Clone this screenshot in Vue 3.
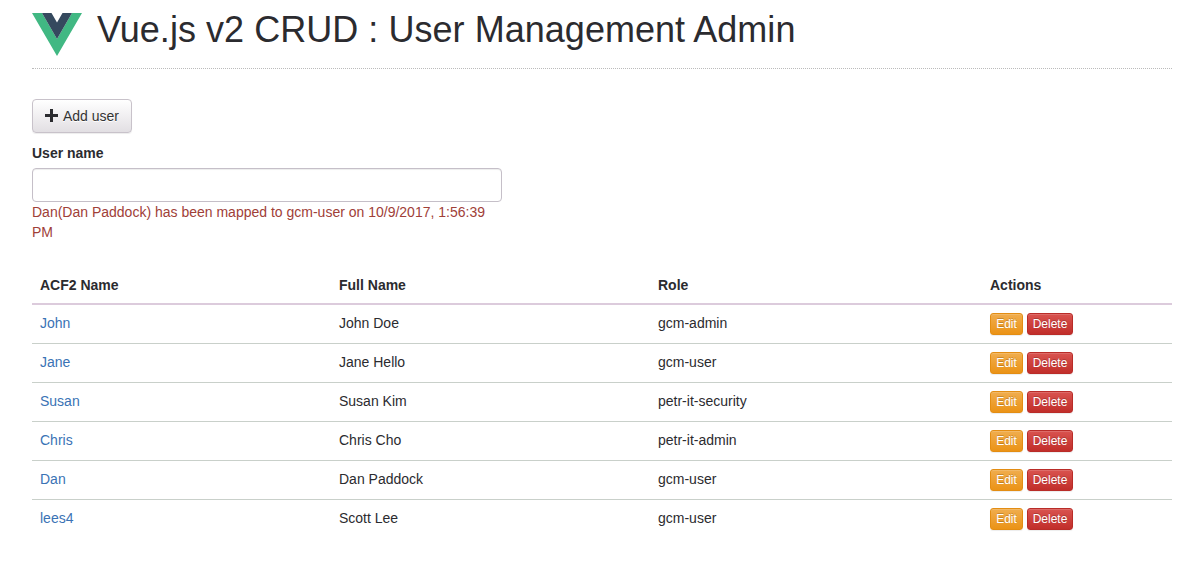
<script setup>
import { ref } from 'vue'

const userName = ref('')
const columns = ['ACF2 Name', 'Full Name', 'Role', 'Actions']
const users = [
  { id: 'John', name: 'John Doe', role: 'gcm-admin' },
  { id: 'Jane', name: 'Jane Hello', role: 'gcm-user' },
  { id: 'Susan', name: 'Susan Kim', role: 'petr-it-security' },
  { id: 'Chris', name: 'Chris Cho', role: 'petr-it-admin' },
  { id: 'Dan', name: 'Dan Paddock', role: 'gcm-user' },
  { id: 'lees4', name: 'Scott Lee', role: 'gcm-user' },
]
</script>

<template>
  <main class="container">
    <header class="page-header">
      <svg class="logo" width="50" height="43" viewBox="0 0 50 43">
        <path d="M0 0H10L25 26L40 0H50L25 43Z" fill="#41b883" />
        <path d="M10 0H19.5L25 9.5L30.5 0H40L25 26Z" fill="#35495e" />
      </svg>
      <h1>Vue.js v2 CRUD : User Management Admin</h1>
    </header>

    <button class="btn add" type="button">
      <svg class="plus" width="13" height="13" viewBox="0 0 13 13">
        <path d="M5 0H8V5H13V8H8V13H5V8H0V5H5Z" fill="#2b2b2f" />
      </svg>
      <span>Add user</span>
    </button>

    <section class="search">
      <label for="user-name">User name</label>
      <input id="user-name" v-model="userName" type="text" />
      <p class="message">Dan(Dan Paddock) has been mapped to gcm-user on 10/9/2017, 1:56:39 PM</p>
    </section>

    <section class="table">
      <div class="row head">
        <div v-for="c in columns" :key="c" class="cell">{{ c }}</div>
      </div>
      <div v-for="u in users" :key="u.id" class="row">
        <div class="cell"><a href="#">{{ u.id }}</a></div>
        <div class="cell">{{ u.name }}</div>
        <div class="cell">{{ u.role }}</div>
        <div class="cell actions">
          <button class="btn xs edit" type="button">Edit</button>
          <button class="btn xs delete" type="button">Delete</button>
        </div>
      </div>
    </section>
  </main>
</template>

<style>
body {
  background: #fff;
}
</style>

<style scoped>
* {
  box-sizing: border-box;
}
.container {
  width: 1140px;
  height: 561px;
  margin-left: 32px;
  font: 14px/20px "Liberation Sans", Arial, sans-serif;
  color: #2b2b2f;
}
.page-header {
  display: flex;
  height: 69px;
  padding-top: 10px;
  border-bottom: 1px dotted #bbb;
}
.logo {
  margin: 3px 15px 0 0;
}
h1 {
  margin: 0;
  font-size: 36px;
  font-weight: 400;
  line-height: 40px;
  letter-spacing: 0.04px;
  white-space: nowrap;
}
.btn {
  display: flex;
  align-items: center;
  justify-content: center;
  padding: 0;
  border: 1px solid;
  border-radius: 4px;
  font-family: inherit;
  box-shadow: inset 0 1px 0 rgba(255, 255, 255, 0.15), 0 1px 1px rgba(0, 0, 0, 0.075);
}
.add {
  width: 100px;
  height: 34px;
  margin-top: 30px;
  gap: 5px;
  color: #333;
  font-size: 14px;
  line-height: 20px;
  text-shadow: 0 1px 0 #fff;
  background: linear-gradient(#fff, #e2dfe3);
  border-color: #c8c2ca;
}
.plus {
  margin-bottom: 2px;
}
.search {
  width: 470px;
  height: 134px;
  padding-top: 10px;
}
label {
  display: block;
  height: 25px;
  font-weight: 700;
}
input {
  display: block;
  width: 100%;
  height: 34px;
  padding: 6px 12px;
  border: 1px solid #c5bfc8;
  border-radius: 4px;
  background: #fff;
  box-shadow: inset 0 1px 1px rgba(0, 0, 0, 0.075);
  font: inherit;
}
.message {
  margin: 0;
  color: #a04038;
}
.row {
  display: grid;
  grid-template-columns: 299px 319px 332px 190px;
  height: 39px;
  border-top: 1px solid #c9d0ca;
}
.head {
  height: 38px;
  border-top: 0;
  border-bottom: 2px solid #dccbdc;
  font-weight: 700;
}
.head + .row {
  height: 38px;
  border-top: 0;
}
.cell {
  padding: 8px;
}
a {
  color: #3a73b5;
  text-decoration: none;
}
.actions {
  display: flex;
  gap: 4px;
}
.xs {
  height: 22px;
  border-radius: 3px;
  color: #fff;
  font-size: 12px;
  line-height: 18px;
  text-shadow: 0 -1px 0 rgba(0, 0, 0, 0.2);
}
.edit {
  width: 33px;
  background: linear-gradient(#f0ad4e, #eb9316);
  border-color: #e38d13;
}
.delete {
  width: 46px;
  background: linear-gradient(#d9534f, #c12e2a);
  border-color: #b92c28;
}
</style>
